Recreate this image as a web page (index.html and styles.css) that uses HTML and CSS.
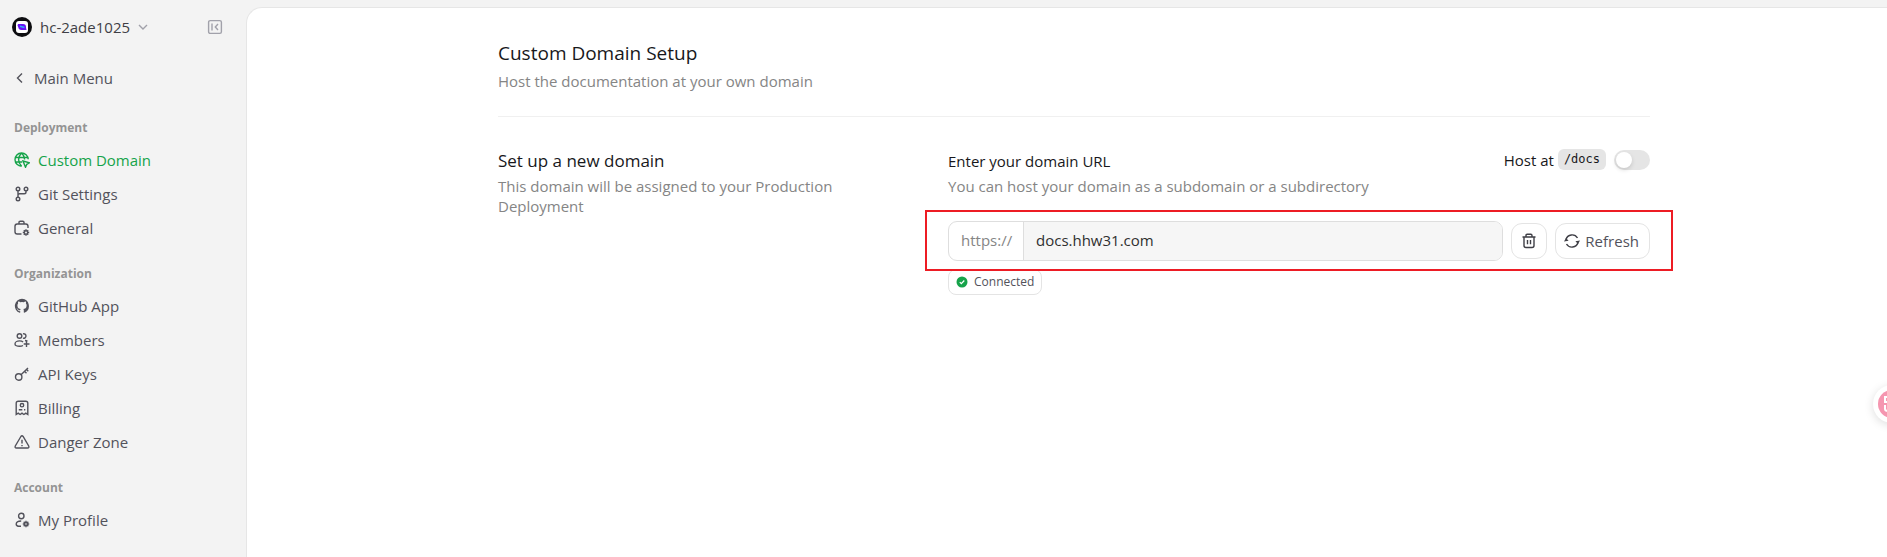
FILE: index.html
```html
<!DOCTYPE html>
<html lang="en">
<head>
<meta charset="utf-8">
<meta name="viewport" content="width=device-width, initial-scale=1">
<title>Custom Domain Setup</title>
<link rel="stylesheet" href="styles.css">
</head>
<body>
<div class="app">
  <aside class="sidebar">
    <div class="workspace">
      <button class="workspace-switch" type="button">
        <svg class="logo" viewBox="0 0 20 20" aria-hidden="true"><circle cx="10" cy="10" r="10" fill="#0d0d10"/><rect x="4" y="4" width="12" height="12" rx="3" fill="#fff"/><path d="M6 7h5q3 0 3 3v.8l.5 2.200H9.500Q6.500 13 6.200 10L5.500 8.500z" fill="#6a11f5"/><path d="M8 9.300l4.500 1.200" stroke="#2fb0f5" stroke-width="1.600"/></svg>
        <span>hc-2ade1025</span>
        <svg class="chevron" viewBox="0 0 10 10" aria-hidden="true"><path d="M1 3l4 4 4-4"/></svg>
      </button>
      <button class="collapse" type="button" aria-label="Collapse sidebar">
        <svg viewBox="0 0 16 16" aria-hidden="true"><rect x="1.600" y="1.600" width="12.800" height="12.800" rx="1.600"/><path d="M5 4.500v7M11 5L8.300 8l2.700 3"/></svg>
      </button>
    </div>
    <a class="back" href="#"><svg viewBox="0 0 12 12" aria-hidden="true"><path d="M8 1.500L3.500 6 8 10.500"/></svg>Main Menu</a>
    <nav class="nav">
      <section class="group">
        <h2>Deployment</h2>
        <a class="active" href="#"><svg viewBox="0 0 16 16" aria-hidden="true"><path d="M14.200 7.300A6.600 6.600 0 1 0 7.600 14.200M1.200 5.500h12.500M1.200 10h7M7.600 1c-4 4-4 9.200 0 13.200M7.600 1c2 2 3 4.300 3 6.500"/><path d="M9 9l6.500 1.800-2.700 1.500-1.300 3z"/></svg>Custom Domain</a>
        <a href="#"><svg viewBox="0 0 16 16" aria-hidden="true"><circle cx="4" cy="3" r="1.800"/><circle cx="12" cy="3" r="1.800"/><circle cx="4" cy="13" r="1.800"/><path d="M4 4.800v6.400M12 4.800v1.200q0 1.800-1.800 1.800H5.500Q4 7.800 4 9.500"/></svg>Git Settings</a>
        <a href="#"><svg viewBox="0 0 16 16" aria-hidden="true"><path d="M7.500 14H3.200Q1 14 1 11.800V6.200Q1 4 3.200 4h8.600Q14 4 14 6.200V8M5 4V2.300Q5 1.200 6.200 1.200h2.600Q10 1.200 10 2.300V4"/><circle cx="12" cy="12.500" r="1.700"/><path d="M12 9.200v1.500M12 14.300v1.500M8.800 12.500h1.500M13.700 12.500h1.500M9.800 10.300l1 1M13.200 13.700l1 1M14.200 10.300l-1 1M10.800 13.700l-1 1"/></svg>General</a>
      </section>
      <section class="group">
        <h2>Organization</h2>
        <a href="#"><svg viewBox="0 0 16 16" aria-hidden="true"><path class="solid" d="M8 .8a7.200 7.200 0 0 0-2.300 14c.4.100.5-.2.500-.4v-1.300c-2 .4-2.400-1-2.400-1-.3-.8-.8-1-.8-1-.7-.5 0-.5 0-.5.7.1 1.100.8 1.100.8.7 1.100 1.700.8 2.100.6.1-.5.300-.8.500-1-1.600-.2-3.300-.8-3.300-3.600 0-.8.3-1.400.7-1.900 0-.2-.3-.9.100-1.900 0 0 .6-.2 2 .7a7 7 0 0 1 3.600 0c1.400-.9 2-.7 2-.7.4 1 .1 1.700.1 1.900.5.500.7 1.100.7 1.900 0 2.800-1.700 3.400-3.300 3.600.3.200.5.700.5 1.300v2c0 .2.100.5.500.4A7.200 7.200 0 0 0 8 .8z"/></svg>GitHub App</a>
        <a href="#"><svg viewBox="0 0 16 16" aria-hidden="true"><circle cx="5.500" cy="4" r="2.300"/><path d="M9 1.800a2.300 2.300 0 1 1 0 4.400M9 13.500c-1 .6-2.300.8-3.500.8-2.400 0-4.500-.8-4.500-2.400s2-3 4.500-3c1.500 0 2.800.4 3.600 1.100M11 8.500c1 .1 1.800.4 2.400.9M12.500 9v6M9.700 12h5.800"/></svg>Members</a>
        <a href="#"><svg viewBox="0 0 16 16" aria-hidden="true"><circle cx="4.700" cy="11" r="3.200"/><path d="M7 8.700L14 2M10.500 5.300l2 2M12.500 3.500l1.800 1.800"/></svg>API Keys</a>
        <a href="#"><svg viewBox="0 0 16 16" aria-hidden="true"><path d="M2.200 14.500V3.200Q2.200 1.200 4.200 1.200h7.600q2 0 2 2v11.300l-2-1.300-1.900 1.300L8 13.200l-1.900 1.300-1.900-1.300z"/><circle cx="8" cy="5.200" r="1.700"/><path d="M4.800 9.800h3.500M10 9.800h1.300"/></svg>Billing</a>
        <a href="#"><svg viewBox="0 0 16 16" aria-hidden="true"><path d="M6.900 2.500L1.300 12q-.8 2 1.200 2h11q2 0 1.200-2L9.100 2.500Q8 1 6.900 2.500zM8 5.800V9.500M8 11v1.300"/></svg>Danger Zone</a>
      </section>
      <section class="group">
        <h2>Account</h2>
        <a href="#"><svg viewBox="0 0 16 16" aria-hidden="true"><circle cx="7.300" cy="4" r="2.700"/><path d="M7 14.300H4.500Q2.200 14 2.200 12q.3-3 5-3"/><circle cx="12" cy="12" r="1.500"/><path d="M12 8.700v1.800M12 13.500v1.800M8.800 12h1.700M13.500 12h1.700M9.700 9.700l1.200 1.200M13.100 13.100l1.200 1.200M14.300 9.700l-1.200 1.200M10.900 13.100l-1.200 1.200"/></svg>My Profile</a>
      </section>
    </nav>
  </aside>

  <main class="panel">
    <div class="content">
      <header class="page-head">
        <h1>Custom Domain Setup</h1>
        <p>Host the documentation at your own domain</p>
      </header>
      <section class="setup">
        <div class="setup-info">
          <h2>Set up a new domain</h2>
          <p>This domain will be assigned to your Production Deployment</p>
        </div>
        <div class="setup-form">
          <div class="form-head">
            <div class="form-text">
              <label class="form-label" for="domain">Enter your domain URL</label>
              <p>You can host your domain as a subdomain or a subdirectory</p>
            </div>
            <label class="host-at"><span>Host at</span><code>/docs</code><input class="switch" type="checkbox" role="switch"></label>
          </div>
          <div class="domain-row">
            <div class="field"><span class="prefix">https://</span><input id="domain" type="text" value="docs.hhw31.com" readonly></div>
            <button class="btn icon-only" type="button" aria-label="Delete domain"><svg viewBox="0 0 16 16" aria-hidden="true"><path d="M1.500 4h13M3 4v8.500q0 2 2 2h6q2 0 2-2V4M5 4V2.500Q5 1.300 6.200 1.300h3.600Q11 1.300 11 2.500V4M6.500 7v4.300M9.500 7v4.300"/></svg></button>
            <button class="btn" type="button"><svg viewBox="0 0 16 16" aria-hidden="true"><path d="M2 6.500A6.300 6.300 0 0 1 13.500 5M14 9.500A6.300 6.300 0 0 1 2.500 11"/><path class="solid" d="M0 8.500L2 5l2.600 2.800zM16 7.500L14 11l-2.600-2.800z"/></svg>Refresh</button>
            <span class="highlight"></span>
          </div>
          <div class="status"><svg viewBox="0 0 12 12" aria-hidden="true"><circle cx="6" cy="6" r="5.500" fill="#16a34a"/><path d="M3.800 6.200l1.500 1.500 3-3.200" fill="none" stroke="#fff" stroke-width="1.200"/></svg>Connected</div>
        </div>
      </section>
    </div>
  </main>
  <button class="floating" type="button" aria-label="Translate page"><svg viewBox="0 0 28 28" aria-hidden="true"><circle cx="14" cy="14" r="14" fill="#f596b0"/><path d="M12 7H7v5h5M7 15v4q0 2 3 2" fill="none" stroke="#fff" stroke-width="2"/></svg></button>
</div>
</body>
</html>
```
FILE: styles.css
```css
* { box-sizing: border-box; }

body {
  margin: 0;
  background: #f3f3f3;
  color: #18181b;
  font: 15px/20px "Open Sans", "Noto Sans", sans-serif;
}

h1, h2, p { margin: 0; font-weight: 400; }

button, input { font: inherit; color: inherit; }

button { padding: 0; border: 0; background: none; }

a { color: inherit; text-decoration: none; }

svg { flex: none; }

.app { display: flex; min-height: 100vh; overflow: hidden; }

/* Sidebar */
.sidebar { width: 246px; flex: none; padding: 16px 23px 0 12px; color: #52525b; }

.sidebar svg:not(.logo), .btn svg { fill: none; stroke: currentColor; stroke-width: 1.4; }

svg .solid { fill: currentColor; stroke: none; }

.workspace { display: flex; align-items: center; justify-content: space-between; height: 22px; }

.workspace-switch { display: flex; align-items: center; gap: 8px; color: #3f3f46; }

.logo { width: 20px; height: 20px; }

.chevron { width: 10px; height: 10px; color: #a1a1aa; }

.collapse { display: flex; color: #a1a1aa; }

.collapse svg { width: 16px; height: 16px; }

.back { display: flex; align-items: center; gap: 8px; margin-top: 30px; padding-left: 2px; }

.back svg { width: 12px; height: 12px; }

.nav { display: grid; gap: 19px; margin-top: 30px; }

.group h2 { margin: 0 0 5px 2px; color: #949494; font-size: 12px; font-weight: 700; }

.group a { display: flex; align-items: center; gap: 8px; height: 34px; padding-left: 2px; }

.group svg { width: 16px; height: 16px; }

.group .active { color: #16a34a; }

/* Main panel */
.panel {
  flex: 1;
  min-width: 0;
  margin-top: 7px;
  padding: 32px 16px 32px 30px;
  border: 1px solid #e6e6e6;
  border-width: 1px 0 0 1px;
  border-radius: 16px 0 0 0;
  background: #fff;
}

.content { max-width: 1152px; margin: 0 auto; }

.content p { color: #858585; }

.page-head { padding-bottom: 25px; border-bottom: 1px solid #f0f0f0; }

h1 { margin-bottom: 5px; font-size: 19px; line-height: 26px; }

.setup { display: grid; grid-template-columns: 350px minmax(0, 702px); justify-content: space-between; padding-top: 32px; }

.setup-info h2 { margin-bottom: 3px; font-size: 17px; line-height: 24px; }

.form-head { display: flex; justify-content: space-between; align-items: flex-start; }

.form-text { padding-top: 2px; }

.form-label { display: block; margin-bottom: 5px; }

.host-at { display: flex; align-items: center; }

.host-at code {
  margin: 0 8px 0 4px;
  padding: 0 6px;
  border-radius: 6px;
  background: #e5e5e5;
  font: 12px/21px "DejaVu Sans Mono", monospace;
}

.switch {
  appearance: none;
  display: flex;
  align-items: center;
  width: 36px;
  height: 20px;
  margin: 0;
  padding: 2px;
  border-radius: 10px;
  background: #e5e5e5;
}

.switch::before {
  content: "";
  width: 16px;
  height: 16px;
  border-radius: 50%;
  background: #fff;
  box-shadow: 0 2px 4px #00000022;
}

.switch:checked { justify-content: flex-end; background: #16a34a; }

.domain-row { position: relative; display: flex; align-items: center; gap: 8px; margin-top: 25px; }

.field {
  display: flex;
  flex: 1;
  min-width: 0;
  height: 40px;
  overflow: hidden;
  border: 1px solid #dedede;
  border-radius: 9px;
}

.prefix { width: 75px; padding: 8px 0 0 12px; border-right: 1px solid #dedede; color: #858585; }

.field input { flex: 1; min-width: 0; padding: 0 12px 2px; border: 0; outline: 0; background: #f6f6f6; color: #303030; }

.btn {
  display: flex;
  align-items: center;
  justify-content: center;
  gap: 5px;
  height: 36px;
  padding: 0 10px 0 8px;
  border: 1px solid #e4e4e4;
  border-radius: 11px;
  background: #fff;
  color: #52525b;
}

.btn svg { width: 16px; height: 16px; color: #3f3f46; }

.icon-only { width: 36px; padding: 0; }

/* Callout frame drawn over the domain row */
.highlight { position: absolute; inset: -11px -23px -10px; border: 2px solid #ed1c24; pointer-events: none; }

.status {
  display: inline-flex;
  align-items: center;
  gap: 6px;
  height: 26px;
  margin-top: 8px;
  padding: 0 7px;
  border: 1px solid #e4e4e4;
  border-radius: 8px;
  color: #52525b;
  font-size: 12px;
}

.status svg { width: 12px; height: 12px; }

/* Floating widget at the window edge */
.floating {
  position: fixed;
  top: 385px;
  right: -24px;
  display: grid;
  place-items: center;
  width: 38px;
  height: 38px;
  border-radius: 50%;
  background: #fff;
  box-shadow: 0 2px 10px #00000022;
}

.floating svg { width: 28px; height: 28px; }
```
